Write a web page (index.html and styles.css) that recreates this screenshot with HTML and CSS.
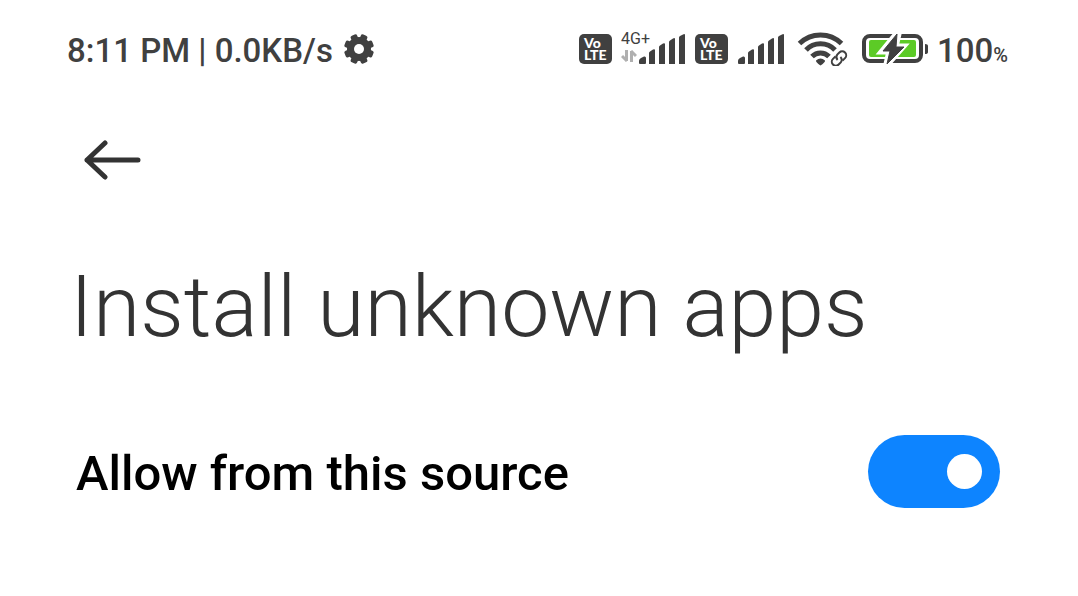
FILE: index.html
```html
<!DOCTYPE html>
<html lang="en">
<head>
<meta charset="utf-8">
<meta name="viewport" content="width=device-width, initial-scale=1">
<title>Install unknown apps</title>
<link rel="stylesheet" href="styles.css">
</head>
<body>
<svg class="defs" aria-hidden="true">
  <symbol id="bars" viewBox="0 0 48 30">
    <path d="M1 29V27Q1 25 3 24L6 22.500Q8 22 8 24V29Q8 30 7 30H2Q1 30 1 29ZM11 30V19Q11 18 12 17.500L15 15.500Q17 15 17 16V30ZM21 30V13Q21 12 22 11.500L25 9.500Q27 9 27 10V30ZM31 30V8Q31 7 32 6.500L35 4.500Q37 3.500 37 5V30ZM41 30V3.500Q41 2.500 42 2L45 0.500Q47 -0.500 47 1V30Z"/>
  </symbol>
</svg>
<header class="status">
  <div class="status-left">
    <span class="status-text">8:11 PM | 0.0KB/s</span>
    <svg class="gear" viewBox="0 0 30 30" aria-hidden="true">
      <g class="teeth">
        <rect x="11.500" y="0" width="7" height="30" rx="2" transform="rotate(22.500 15 15)"/>
        <rect x="11.500" y="0" width="7" height="30" rx="2" transform="rotate(67.500 15 15)"/>
        <rect x="11.500" y="0" width="7" height="30" rx="2" transform="rotate(112.500 15 15)"/>
        <rect x="11.500" y="0" width="7" height="30" rx="2" transform="rotate(157.500 15 15)"/>
        <circle cx="15" cy="15" r="12"/>
      </g>
      <circle cx="15" cy="15" r="5" fill="#fff"/>
    </svg>
  </div>
  <div class="status-right">
    <div class="volte"><span>Vo</span><span>LTE</span></div>
    <div class="network">
      <div class="network-type">
        <span>4G+</span>
        <svg class="traffic" viewBox="0 0 16 12" aria-hidden="true">
          <path d="M5.500 0V11M6 11L1 6M10.500 12V1M10 1L15 6"/>
        </svg>
      </div>
      <svg class="bars" aria-hidden="true"><use href="#bars"/></svg>
    </div>
    <div class="volte"><span>Vo</span><span>LTE</span></div>
    <svg class="bars" aria-hidden="true"><use href="#bars"/></svg>
    <svg class="wifi" viewBox="0 0 51 34" aria-hidden="true">
      <g fill="none" stroke="#404040" stroke-width="5">
        <path d="M2.500 11.500A30 30 0 0 1 44.500 11.500"/>
        <path d="M9 18A20 20 0 0 1 38 18"/>
        <path d="M15 24.500A12 12 0 0 1 32 24.500"/>
      </g>
      <path d="M19 28.500Q23.500 24.500 28 28.500Q28.500 30 23.500 33.500Q18.500 30 19 28.500Z"/>
      <g fill="none" stroke="#404040" stroke-width="2" transform="rotate(-45 42 26.500)">
        <path d="M41 22.500H37.500A4 4 0 0 0 37.500 30.500H40.500A4 4 0 0 0 44 26.500"/>
        <path d="M43 30.500H46.500A4 4 0 0 0 46.500 22.500H43.500A4 4 0 0 0 40 26.500"/>
      </g>
    </svg>
    <svg class="battery" viewBox="0 0 68 32" aria-hidden="true">
      <rect x="3" y="3" width="57" height="25" rx="6" fill="#fff" stroke="#404040" stroke-width="4"/>
      <rect x="8" y="7" width="47" height="17" rx="2" fill="#5ccb26"/>
      <path d="M64 11Q67 11 67 13V19Q67 21 64 21Z"/>
      <path d="M36 1L22 18H29L26 31L41 14H34L37 1Z" fill="#fff" stroke="#fff" stroke-width="7"/>
      <path d="M36 1L22 18H29L26 31L43 14H35Z" stroke="#404040" stroke-width="1"/>
    </svg>
    <div class="status-text percent">100<small>%</small></div>
  </div>
</header>
<main>
  <button class="back" type="button" aria-label="Back">
    <svg viewBox="0 0 58 40" aria-hidden="true">
      <path d="M54 20H3M21 3L3 20L21 37"/>
    </svg>
  </button>
  <h1>Install unknown apps</h1>
  <div class="setting">
    <label for="allow">Allow from this source</label>
    <input class="switch" id="allow" type="checkbox" role="switch" checked>
  </div>
</main>
</body>
</html>
```
FILE: styles.css
```css
* {
  box-sizing: border-box;
}

body {
  margin: 0;
  background: #fff;
  color: #333;
  font-family: Roboto, "Liberation Sans", sans-serif;
}

svg {
  display: block;
  flex: none;
}

.defs {
  display: none;
}

.status {
  display: flex;
  justify-content: space-between;
  padding: 27px 70px 0 67px;
  color: #404040;
  fill: #404040;
  font-size: 33px;
  font-weight: 500;
  line-height: 40px;
  white-space: nowrap;
}

.status-left,
.status-right {
  display: flex;
  align-items: center;
}

.status-left {
  gap: 11px;
}

.status-right {
  gap: 9px;
}

.status-text {
  padding-top: 4px;
}

.gear {
  width: 30px;
  height: 30px;
}

.volte {
  display: flex;
  flex-direction: column;
  justify-content: center;
  width: 33px;
  height: 30px;
  padding-left: 5px;
  border-radius: 5px;
  background: #404040;
  color: #fff;
  font-family: Lato, sans-serif;
  font-size: 14px;
  font-weight: 900;
  line-height: 12px;
}

.network {
  display: flex;
  align-items: flex-end;
  gap: 1px;
  padding-bottom: 4px;
}

.network-type {
  display: flex;
  flex-direction: column;
  width: 16px;
  gap: 3px;
  padding-bottom: 2px;
  font-size: 16px;
  font-weight: 400;
  line-height: 16px;
}

.traffic {
  width: 16px;
  height: 12px;
  fill: none;
  stroke: #b0b0b0;
  stroke-width: 3px;
}

.bars {
  width: 48px;
  height: 30px;
}

.wifi {
  width: 51px;
  height: 34px;
  margin-left: 3px;
}

.battery {
  width: 68px;
  height: 32px;
  margin-left: 4px;
}

.percent {
  margin-left: -1px;
}

.percent small {
  font-size: 20px;
  line-height: 1;
}

main {
  padding: 62px 78px 0 76px;
}

.back {
  display: block;
  margin: 0;
  padding: 7px 8px;
  border: 0;
  background: none;
}

.back svg {
  width: 58px;
  height: 40px;
  fill: none;
  stroke: #333;
  stroke-width: 5px;
  stroke-linecap: round;
  stroke-linejoin: round;
}

h1 {
  margin: 70px 0 0 -6px;
  font-size: 86px;
  font-weight: 300;
  line-height: 100px;
}

.setting {
  display: flex;
  align-items: center;
  justify-content: space-between;
  margin-top: 78px;
  color: #000;
  font-size: 49px;
  font-weight: 500;
  line-height: 60px;
}

.setting label {
  padding-top: 4px;
}

.switch {
  display: flex;
  align-items: center;
  justify-content: flex-end;
  width: 132px;
  height: 73px;
  margin: 0;
  padding-right: 18px;
  border-radius: 37px;
  background: #0d84ff;
  appearance: none;
}

.switch::before {
  content: "";
  width: 35px;
  height: 35px;
  border-radius: 50%;
  background: #fff;
}

.switch:not(:checked) {
  justify-content: flex-start;
  padding-left: 18px;
  background: #ccc;
}
```
